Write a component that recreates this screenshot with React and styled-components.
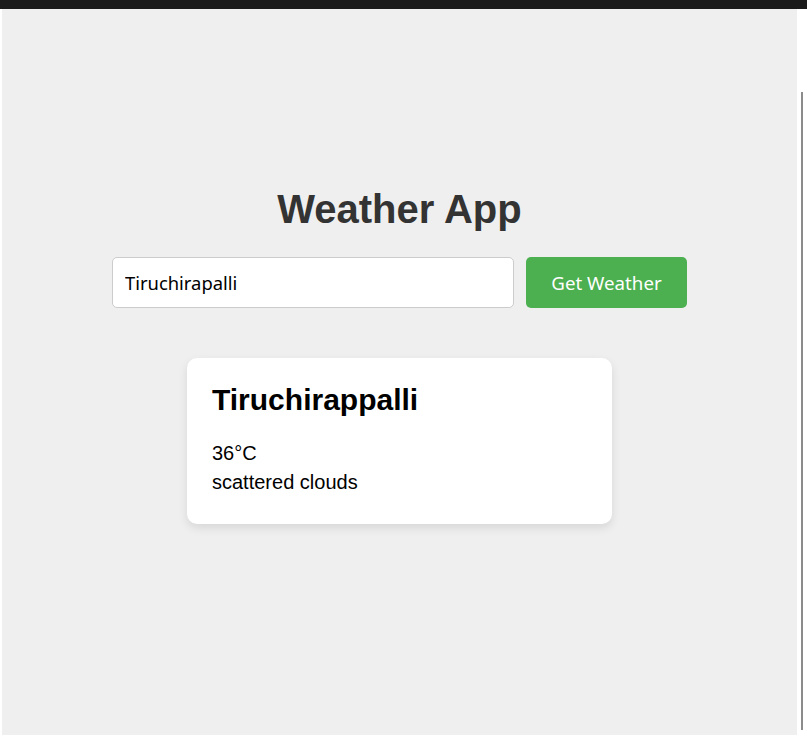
import React from 'react';
import styled, { createGlobalStyle } from 'styled-components';

const GlobalStyle = createGlobalStyle`
    html, body {
        margin: 0;
        padding: 0;
        background: #ffffff;
        font-family: "Liberation Sans", Arial, sans-serif;
    }
`;

const TopBar = styled.div`
    height: 9px;
    background: #1b1b1b;
`;

const Frame = styled.div`
    display: flex;
    padding-left: 2px;
`;

const Panel = styled.main`
    width: 795px;
    height: 726px;
    background: #efefef;
    display: flex;
    flex-direction: column;
    align-items: center;
    padding-top: 178px;
    box-sizing: border-box;
`;

const ScrollTrack = styled.div`
    width: 10px;
    padding: 83px 0 0 4px;
    box-sizing: border-box;
`;

const ScrollThumb = styled.div`
    width: 2px;
    height: 638px;
    background: #8c8c8c;
`;

const Title = styled.h1`
    margin: 0 0 25px;
    font-size: 40px;
    font-weight: bold;
    color: #333333;
`;

const SearchRow = styled.form`
    display: flex;
    gap: 12px;
    margin: 0;
`;

const CityInput = styled.input`
    width: 402px;
    height: 51px;
    box-sizing: border-box;
    padding: 0 12px;
    border: 1px solid #cccccc;
    border-radius: 5px;
    background: #ffffff;
    font-family: "Noto Sans", "Open Sans", sans-serif;
    font-size: 18.4px;
    color: #000000;
    outline: none;
`;

const Button = styled.button`
    width: 161px;
    height: 51px;
    border: none;
    border-radius: 5px;
    background: #4caf50;
    color: #ffffff;
    font-family: "Noto Sans", "Open Sans", sans-serif;
    font-size: 18.7px;
    cursor: pointer;
`;

const Card = styled.section`
    width: 425px;
    margin-top: 50px;
    padding: 25px 25px 27px;
    box-sizing: border-box;
    background: #ffffff;
    border-radius: 10px;
    box-shadow: 0 4px 10px rgba(0, 0, 0, 0.1);
    color: #000000;
`;

const City = styled.h2`
    margin: 0 0 22px;
    font-size: 30px;
    font-weight: bold;
`;

const Line = styled.p`
    margin: 0;
    font-size: 20px;
    line-height: 29px;
`;

const App = () => {
    const weather = { city: 'Tiruchirappalli', temp: 36, description: 'scattered clouds' };

    return (
        <>
            <GlobalStyle />
            <TopBar />
            <Frame>
                <Panel>
                    <Title>Weather App</Title>
                    <SearchRow onSubmit={(e) => e.preventDefault()}>
                        <CityInput defaultValue="Tiruchirapalli" />
                        <Button type="submit">Get Weather</Button>
                    </SearchRow>
                    <Card>
                        <City>{weather.city}</City>
                        <Line>{weather.temp}°C</Line>
                        <Line>{weather.description}</Line>
                    </Card>
                </Panel>
                <ScrollTrack>
                    <ScrollThumb />
                </ScrollTrack>
            </Frame>
        </>
    );
};

export default App;
